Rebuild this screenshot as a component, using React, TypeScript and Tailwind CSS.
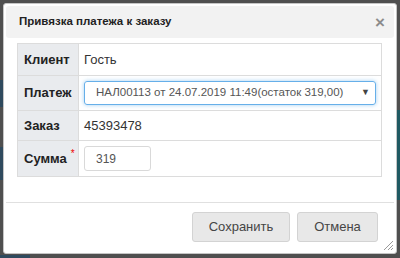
const ROWS_FONT = { fontFamily: '"Liberation Sans", Arial, sans-serif' };

function ResizeGrip() {
  return (
    <svg className="absolute bottom-[2px] right-[2px]" width="12" height="12" viewBox="0 0 12 12">
      <path d="M11 2 L2 11 M11 6 L6 11 M11 9 L9 11" stroke="#9a9a9a" strokeWidth="1" />
    </svg>
  );
}

export default function App() {
  return (
    <div
      className="relative h-[258px] w-[400px] overflow-hidden bg-[#4f4f4f] pl-[3px] pt-[3px]"
      style={ROWS_FONT}
    >
      {/* bits of the page behind the overlay */}
      <div className="absolute left-0 top-[80px] h-[27px] w-[3px] bg-[#2f4a5e]" />
      <div className="absolute left-0 top-[147px] h-[33px] w-[3px] bg-[#2f4a5e]" />
      <div className="absolute right-0 top-[110px] h-[90px] w-[3px] bg-[#1f5962]" />
      <div className="absolute bottom-0 left-0 h-[3px] w-[30px] bg-[#2f4a5e]" />

      <div className="relative flex h-[251px] w-[394px] flex-col rounded-[3px] border border-[#c5c5c5] bg-white p-[2px]">
        {/* title bar */}
        <div className="flex h-[32px] items-center justify-between rounded-[3px] bg-[#f2f2f2] pl-[13px] pr-[9px]">
          <span className="text-[11.5px] font-bold text-[#222]">Привязка платежа к заказу</span>
          <span className="text-[17px] font-bold leading-none text-[#8c8c8c]">×</span>
        </div>

        {/* form */}
        <div className="px-[11px] pt-[5px]">
          <table className="w-[365px] border-collapse text-[13px] text-[#333]">
            <tbody>
              <tr className="h-[32px]">
                <td className="w-[61px] border border-[#dcdcdc] bg-[#e9ebee] pl-[6px] font-bold text-[#222]">Клиент</td>
                <td className="border border-[#dcdcdc] pl-[5px]">Гость</td>
              </tr>
              <tr className="h-[35px]">
                <td className="border border-[#dcdcdc] bg-[#e9ebee] pl-[6px] font-bold text-[#222]">Платеж</td>
                <td className="border border-[#dcdcdc] px-[5px]">
                  <div className="flex h-[24px] w-[292px] items-center justify-between rounded-[3px] border border-[#66afe9] pl-[11px] pr-[5px] text-[11.5px] text-[#555] shadow-[0_0_4px_rgba(102,175,233,0.6)]">
                    <span className="whitespace-nowrap">НАЛ00113 от 24.07.2019 11:49(остаток 319,00)</span>
                    <span className="text-[9px] text-[#444]">▼</span>
                  </div>
                </td>
              </tr>
              <tr className="h-[30px]">
                <td className="border border-[#dcdcdc] bg-[#e9ebee] pl-[6px] font-bold text-[#222]">Заказ</td>
                <td className="border border-[#dcdcdc] pl-[5px]">45393478</td>
              </tr>
              <tr className="h-[36px]">
                <td className="border border-[#dcdcdc] bg-[#e9ebee] pl-[6px] font-bold text-[#222]">
                  <span className="relative">
                    Сумма
                    <span className="absolute -right-[8px] -top-[5px] text-[10px] font-normal text-[#e00]">*</span>
                  </span>
                </td>
                <td className="border border-[#dcdcdc] px-[5px]">
                  <div className="flex h-[25px] w-[67px] items-center rounded-[3px] border border-[#d9d9d9] pl-[11px] text-[12px] text-[#555]">
                    319
                  </div>
                </td>
              </tr>
            </tbody>
          </table>
        </div>

        {/* footer */}
        <div className="mt-[25px] border-t border-[#e0e0e0]">
          <div className="flex justify-end gap-[7px] pr-[16px] pt-[9px]">
            <button className="h-[30px] w-[98px] rounded-[3px] border border-[#d3d3d3] bg-[#e8e8e8] text-[13px] text-[#454545]">
              Сохранить
            </button>
            <button className="h-[30px] w-[81px] rounded-[3px] border border-[#d3d3d3] bg-[#e8e8e8] text-[13px] text-[#454545]">
              Отмена
            </button>
          </div>
        </div>

        <ResizeGrip />
      </div>
    </div>
  );
}
